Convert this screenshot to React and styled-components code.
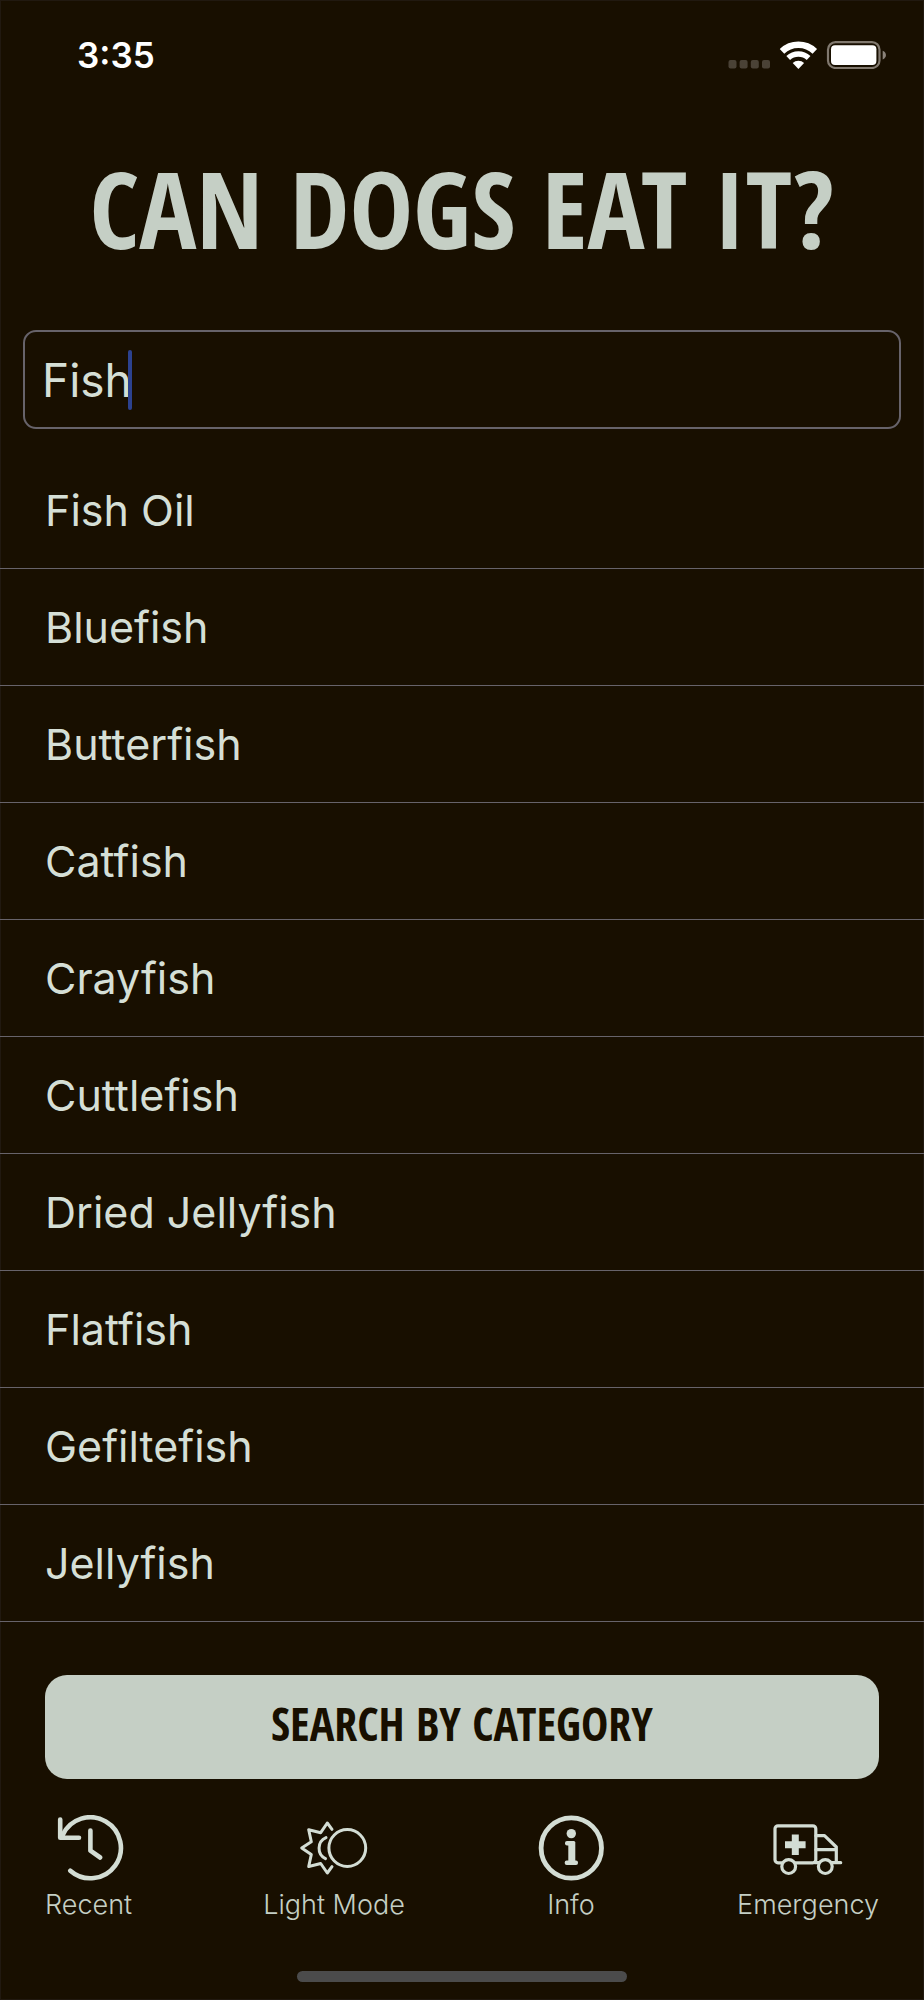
import React, { useState } from 'react'
import styled, { createGlobalStyle } from 'styled-components'

const foods = [
    'Fish Oil',
    'Bluefish',
    'Butterfish',
    'Catfish',
    'Crayfish',
    'Cuttlefish',
    'Dried Jellyfish',
    'Flatfish',
    'Gefiltefish',
    'Jellyfish',
]

const StatusIcons = () => (
    <svg width="160" height="28" viewBox="0 0 160 28" aria-hidden="true">
        <g fill="#4a4236">
            <rect x="0.5" y="19" width="8" height="8.5" rx="2" />
            <rect x="11.6" y="19" width="8" height="8.5" rx="2" />
            <rect x="22.8" y="19" width="8" height="8.5" rx="2" />
            <rect x="34" y="19" width="8" height="8.5" rx="2" />
        </g>
        {/* wifi */}
        <g fill="none" stroke="#fff">
            <path d="M54 10.3A24 24 0 0 1 86.8 10.3" strokeWidth="6.6" />
            <path d="M60.2 17A15 15 0 0 1 80.6 17" strokeWidth="5.5" />
        </g>
        <path d="M70.4 28L64.7 22A8.2 8.2 0 0 1 76.1 22Z" fill="#fff" />
        {/* battery */}
        <rect x="100" y="1.2" width="51.5" height="25.8" rx="7.5" fill="none" stroke="#81796f" strokeWidth="2.2" />
        <rect x="103" y="4.2" width="45.4" height="19.8" rx="4" fill="#fff" />
        <path d="M154.7 9.7C159 11.5 159 16.6 154.7 18.4Z" fill="#8a8279" />
    </svg>
)

const RecentIcon = () => (
    <Icon viewBox="0 0 70 66" aria-hidden="true">
        <g strokeWidth="4.6">
            <path d="M16.3 55.7A30.5 30.5 0 1 0 8.7 20" />
            <path d="M6.2 4.5V22.7H25" />
            <path d="M36.4 15.5V35.7L46.2 42.5" />
        </g>
    </Icon>
)

const LightModeIcon = () => (
    <Icon viewBox="0 0 70 66" aria-hidden="true">
        <g strokeWidth="3">
            <circle cx="48.3" cy="33" r="18.4" />
            <path d="M27 22.6A11.6 11.6 0 0 0 26.5 43.6" />
            <path d="M33 14.3L28.3 8L21.7 17.7L9.7 14.7L12.3 26.7L2.7 33L12.3 39.5L9.7 51.5L21.7 48.5L28.3 58L33 51.7" />
        </g>
    </Icon>
)

const InfoIcon = () => (
    <Icon viewBox="0 0 70 66" aria-hidden="true">
        <circle cx="35.3" cy="33" r="30.2" strokeWidth="4.8" />
        <g fill="#d3ddd4" stroke="none">
            <circle cx="35.3" cy="18.6" r="4.7" />
            <rect x="32.3" y="26" width="7" height="22" rx="1.5" />
            <rect x="29" y="26" width="9" height="4.4" rx="2" />
            <rect x="28.7" y="45.5" width="13.3" height="4.6" rx="2" />
        </g>
    </Icon>
)

const EmergencyIcon = () => (
    <Icon viewBox="0 0 70 66" aria-hidden="true">
        <g strokeWidth="3.2">
            <rect x="2" y="10.8" width="40.8" height="37" rx="3" />
            <path d="M43 20.7H51.5L63.3 32V47.7M43 34.7H63.3M42 47.7H67.7" />
            <circle cx="15.7" cy="51.6" r="6.9" fill="#180f00" />
            <circle cx="52.3" cy="51.6" r="6.9" fill="#180f00" />
        </g>
        <path d="M22.3 19.5V39.9M12 29.7H32.6" strokeWidth="7" strokeLinecap="butt" />
    </Icon>
)

const tabs = [
    { label: 'Recent', icon: RecentIcon },
    { label: 'Light Mode', icon: LightModeIcon },
    { label: 'Info', icon: InfoIcon },
    { label: 'Emergency', icon: EmergencyIcon },
]

const App = () => {
    const [query, setQuery] = useState('Fish')

    return (
        <Wrap>
            <GlobalStyle />

            <StatusBar>
                <Time>3:35</Time>
                <StatusIcons />
            </StatusBar>

            <Title>CAN DOGS EAT IT?</Title>

            <Search>
                <SearchInput
                    type="text"
                    aria-label="Search foods"
                    value={query}
                    onChange={e => setQuery(e.target.value)}
                />
                {query === 'Fish' && <Caret />}
            </Search>

            <List>
                {foods.map(food => (
                    <li key={food}>
                        <FoodLink href="#">{food}</FoodLink>
                    </li>
                ))}
            </List>

            <CategoryButton type="button">SEARCH BY CATEGORY</CategoryButton>

            <TabBar>
                {tabs.map(({ label, icon: TabIcon }) => (
                    <Tab type="button" key={label}>
                        <TabIcon />
                        {label}
                    </Tab>
                ))}
            </TabBar>

            <HomeIndicator />
        </Wrap>
    )
}

export default App

const GlobalStyle = createGlobalStyle`
body {
    margin: 0;
    background-color: #180f00;
}

* {
    box-sizing: border-box;
}
`

const Wrap = styled.div`
min-height: 100vh;
display: flex;
flex-direction: column;
background-color: #180f00;
box-shadow: inset 0 0 0 1px #211910;
color: #d5dfd6;
font-family: Inter, "Liberation Sans", sans-serif;
`

const StatusBar = styled.header`
display: flex;
justify-content: space-between;
align-items: center;
height: 28px;
margin-top: 41px;
padding: 0 36px 0 77px;
`

const Time = styled.span`
color: white;
font-size: 35px;
font-weight: 600;
line-height: 28px;
`

const Title = styled.h1`
margin: 79px 0 62px;
color: #c5cfc5;
font-family: "Open Sans Condensed", "Open Sans", sans-serif;
font-size: 107px;
font-weight: 800;
line-height: 120px;
text-align: center;
white-space: nowrap;
`

const Search = styled.div`
position: relative;
margin: 0 23px 23px;
`

const SearchInput = styled.input`
display: block;
width: 100%;
height: 99px;
padding: 0 17px;
border: 2px solid #67636a;
border-radius: 13px;
outline: none;
background: transparent;
color: inherit;
caret-color: transparent;
font-family: inherit;
font-size: 46px;
`

// text cursor, sits over the end of the typed word
const Caret = styled.span`
position: absolute;
top: 20px;
left: 105px;
width: 4px;
height: 60px;
border-radius: 2px;
background-color: #2c428f;
`

const List = styled.ul`
margin: 0;
padding: 0;
list-style: none;
`

const FoodLink = styled.a`
display: flex;
align-items: center;
height: 117px;
padding: 0 45px;
border-bottom: 1px solid #67636a;
color: inherit;
font-size: 43px;
text-decoration: none;
`

const CategoryButton = styled.button`
height: 104px;
margin: 53px 45px 36px;
padding: 0 0 8px;
border: none;
border-radius: 22px;
background-color: #c5cfc5;
color: #180f00;
font-family: "Open Sans Condensed", "Open Sans", sans-serif;
font-size: 46px;
font-weight: 700;
cursor: pointer;
`

const TabBar = styled.nav`
display: flex;
justify-content: space-between;
padding: 0 45px;
`

const Tab = styled.button`
display: flex;
flex-direction: column;
align-items: center;
gap: 8px;
padding: 0;
border: none;
background: none;
color: #c5cfc5;
font-family: inherit;
font-size: 27px;
font-weight: 300;
line-height: 32px;
cursor: pointer;
`

const Icon = styled.svg`
width: 70px;
height: 66px;
fill: none;
stroke: #d3ddd4;
stroke-linecap: round;
stroke-linejoin: round;
`

const HomeIndicator = styled.div`
align-self: center;
width: 330px;
height: 11px;
margin: 50px 0 18px;
border-radius: 6px;
background-color: #4b4b4b;
`
